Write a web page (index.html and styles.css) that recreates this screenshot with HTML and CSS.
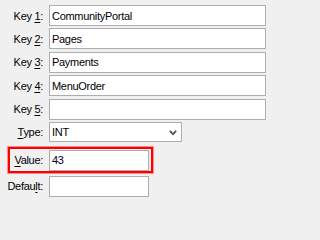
FILE: index.html
```html
<!DOCTYPE html>
<html>
<head>
<meta charset="utf-8">
<link rel="stylesheet" href="styles.css">
</head>
<body>
<div class="form">
  <div class="row"><span class="lbl">Key <u>1</u>:</span><input class="box wide" type="text" value="CommunityPortal"></div>
  <div class="row"><span class="lbl">Key <u>2</u>:</span><input class="box wide" type="text" value="Pages"></div>
  <div class="row"><span class="lbl">Key <u>3</u>:</span><input class="box wide" type="text" value="Payments"></div>
  <div class="row"><span class="lbl">Key <u>4</u>:</span><input class="box wide" type="text" value="MenuOrder"></div>
  <div class="row"><span class="lbl">Key <u>5</u>:</span><input class="box wide" type="text" value=""></div>
  <div class="row"><span class="lbl"><u>T</u>ype:</span>
    <div class="box combo"><span>INT</span>
      <svg class="chev" width="8" height="6" viewBox="0 0 8 6"><path d="M0.8 0.8 L4 4.2 L7.2 0.8" fill="none" stroke="#555" stroke-width="1.8"/></svg>
    </div>
  </div>
  <div class="row row-value"><span class="lbl"><u>V</u>alue:</span><input class="box narrow" type="text" value="43"></div>
  <div class="row row-default"><span class="lbl">Defau<u>l</u>t:</span><input class="box narrow" type="text" value=""></div>
</div>
</body>
</html>
```
FILE: styles.css
```css
html, body {
  margin: 0;
  padding: 0;
  background: #f0f0f0;
}
body {
  font-family: "Liberation Sans", Arial, sans-serif;
  font-size: 11px;
  color: #000;
}
.form {
  display: flex;
  flex-direction: column;
  gap: 2.4px;
  padding-top: 5px;
}
.row {
  display: grid;
  grid-template-columns: 43px auto;
  column-gap: 6px;
  align-items: center;
  justify-content: start;
  height: 21px;
}
.lbl {
  text-align: right;
  white-space: nowrap;
  letter-spacing: -0.3px;
}
.lbl u {
  text-decoration-thickness: 1px;
  text-underline-offset: 2px;
}
.box {
  box-sizing: border-box;
  height: 21px;
  margin: 0;
  border: 1px solid #adadad;
  background: #fff;
  padding: 0 2px;
  font-family: "Liberation Sans", Arial, sans-serif;
  font-size: 11px;
  letter-spacing: -0.3px;
  color: #000;
  outline: none;
  border-radius: 0;
}
.wide { width: 217px; }
.narrow { width: 100px; }
.combo {
  width: 133px;
  height: 20px;
  display: flex;
  align-items: center;
  justify-content: space-between;
  padding: 0 4px 0 2px;
}
.chev {
  display: block;
  margin-top: 1px;
}
.row-value {
  position: relative;
  margin-top: 4.6px;
  margin-bottom: 2.6px;
}
.row-value::after {
  content: "";
  position: absolute;
  left: 8px;
  top: -3px;
  width: 145px;
  height: 26px;
  box-sizing: border-box;
  border: 2px solid #ff0000;
  box-shadow: 0 0 0 1px #ff9090;
  pointer-events: none;
}
```
